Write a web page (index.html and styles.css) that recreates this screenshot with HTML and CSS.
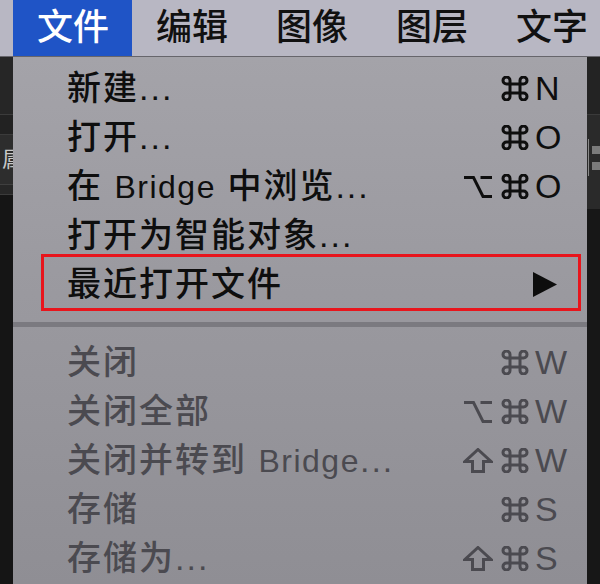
FILE: index.html
```html
<!DOCTYPE html>
<html lang="zh-CN">
<head>
<meta charset="utf-8">
<title>文件菜单</title>
<link rel="stylesheet" href="styles.css">
</head>
<body>
<div class="menubar">
  <div class="mb-item active">文件</div>
  <div class="mb-item">编辑</div>
  <div class="mb-item">图像</div>
  <div class="mb-item">图层</div>
  <div class="mb-item">文字</div>
</div>
<div class="stage">
  <div class="side side-left">
    <div class="blk b1"></div>
    <div class="blk b2"></div>
    <div class="blk b3"><span class="panel-char">属</span></div>
    <div class="blk b4"></div>
    <div class="blk b5"></div>
  </div>
  <div class="menu">
    <div class="row"><span class="label">新建...</span><span class="mods"><svg class="ic" viewBox="0 0 30 25"><path d="M10 8v9h10V8zM10 8H6.5A3.5 3.5 0 1 1 10 4.5zM20 8V4.5A3.5 3.5 0 1 1 23.5 8zM20 17h3.5A3.5 3.5 0 1 1 20 20.5zM10 17v3.5A3.5 3.5 0 1 1 6.5 17z"/></svg></span><span class="key">N</span></div>
    <div class="row"><span class="label">打开...</span><span class="mods"><svg class="ic" viewBox="0 0 30 25"><path d="M10 8v9h10V8zM10 8H6.5A3.5 3.5 0 1 1 10 4.5zM20 8V4.5A3.5 3.5 0 1 1 23.5 8zM20 17h3.5A3.5 3.5 0 1 1 20 20.5zM10 17v3.5A3.5 3.5 0 1 1 6.5 17z"/></svg></span><span class="key">O</span></div>
    <div class="row"><span class="label">在 <span class="lat">Bridge</span> 中浏览...</span><span class="mods"><svg class="ic" viewBox="0 0 30 25"><path d="M1 3.5h9.5l9.5 19h9M17.5 3.5H29"/></svg><svg class="ic" viewBox="0 0 30 25"><path d="M10 8v9h10V8zM10 8H6.5A3.5 3.5 0 1 1 10 4.5zM20 8V4.5A3.5 3.5 0 1 1 23.5 8zM20 17h3.5A3.5 3.5 0 1 1 20 20.5zM10 17v3.5A3.5 3.5 0 1 1 6.5 17z"/></svg></span><span class="key">O</span></div>
    <div class="row"><span class="label">打开为智能对象...</span></div>
    <div class="row marked"><span class="label">最近打开文件</span><svg class="arrow" width="24" height="25" viewBox="0 0 24 25"><polygon points="0,0 24,12.5 0,25" fill="#0d0d0d"/></svg></div>
    <div class="sep"></div>
    <div class="row off"><span class="label">关闭</span><span class="mods"><svg class="ic" viewBox="0 0 30 25"><path d="M10 8v9h10V8zM10 8H6.5A3.5 3.5 0 1 1 10 4.5zM20 8V4.5A3.5 3.5 0 1 1 23.5 8zM20 17h3.5A3.5 3.5 0 1 1 20 20.5zM10 17v3.5A3.5 3.5 0 1 1 6.5 17z"/></svg></span><span class="key">W</span></div>
    <div class="row off"><span class="label">关闭全部</span><span class="mods"><svg class="ic" viewBox="0 0 30 25"><path d="M1 3.5h9.5l9.5 19h9M17.5 3.5H29"/></svg><svg class="ic" viewBox="0 0 30 25"><path d="M10 8v9h10V8zM10 8H6.5A3.5 3.5 0 1 1 10 4.5zM20 8V4.5A3.5 3.5 0 1 1 23.5 8zM20 17h3.5A3.5 3.5 0 1 1 20 20.5zM10 17v3.5A3.5 3.5 0 1 1 6.5 17z"/></svg></span><span class="key">W</span></div>
    <div class="row off"><span class="label">关闭并转到 <span class="lat">Bridge</span>...</span><span class="mods"><svg class="ic" viewBox="0 0 30 25"><path d="M15 1.5L28 13.5h-7.5v10h-11v-10H2z"/></svg><svg class="ic" viewBox="0 0 30 25"><path d="M10 8v9h10V8zM10 8H6.5A3.5 3.5 0 1 1 10 4.5zM20 8V4.5A3.5 3.5 0 1 1 23.5 8zM20 17h3.5A3.5 3.5 0 1 1 20 20.5zM10 17v3.5A3.5 3.5 0 1 1 6.5 17z"/></svg></span><span class="key">W</span></div>
    <div class="row off"><span class="label">存储</span><span class="mods"><svg class="ic" viewBox="0 0 30 25"><path d="M10 8v9h10V8zM10 8H6.5A3.5 3.5 0 1 1 10 4.5zM20 8V4.5A3.5 3.5 0 1 1 23.5 8zM20 17h3.5A3.5 3.5 0 1 1 20 20.5zM10 17v3.5A3.5 3.5 0 1 1 6.5 17z"/></svg></span><span class="key">S</span></div>
    <div class="row off"><span class="label">存储为...</span><span class="mods"><svg class="ic" viewBox="0 0 30 25"><path d="M15 1.5L28 13.5h-7.5v10h-11v-10H2z"/></svg><svg class="ic" viewBox="0 0 30 25"><path d="M10 8v9h10V8zM10 8H6.5A3.5 3.5 0 1 1 10 4.5zM20 8V4.5A3.5 3.5 0 1 1 23.5 8zM20 17h3.5A3.5 3.5 0 1 1 20 20.5zM10 17v3.5A3.5 3.5 0 1 1 6.5 17z"/></svg></span><span class="key">S</span></div>
  </div>
  <div class="side side-right">
    <div class="blk r1"></div>
    <div class="blk r2">
      <div class="scroll-bar"></div>
      <div class="tabs"><div class="tab"></div><div class="tab"></div></div>
    </div>
    <div class="blk r3"></div>
  </div>
</div>
</body>
</html>
```
FILE: styles.css
```css
html, body {
  margin: 0;
  padding: 0;
}
body {
  width: 600px;
  height: 584px;
  overflow: hidden;
  background: #161616;
  font-family: "Liberation Sans", "Noto Sans CJK SC", sans-serif;
}
.menubar {
  display: flex;
  height: 56px;
  padding-left: 13px;
  background: #b8b7c3;
  border-bottom: 1px solid #66656b;
  overflow: hidden;
  white-space: nowrap;
}
.mb-item {
  flex: none;
  padding: 0 24px;
  line-height: 56px;
  font-size: 36px;
  font-weight: 500;
  color: #111;
}
.mb-item.active {
  padding-right: 23px;
  background: #1f54c6;
  color: #fff;
}
.stage {
  display: flex;
  height: 527px;
}
.side {
  width: 13px;
  flex: none;
  display: flex;
  flex-direction: column;
  overflow: hidden;
}
.blk { flex: none; }
.b1 { height: 57px; background: #262626; border-bottom: 1px solid #3b3b3b; }
.b2 { height: 19px; background: #222; border-bottom: 1px solid #3b3b3b; }
.b3 { height: 49px; background: #2d2d2d; border-bottom: 1px solid #3f3f3f; overflow: hidden; }
.b4 { height: 9px; background: #272727; border-bottom: 1px solid #3b3b3b; }
.b5 { flex: 1; background: #151515; }
.panel-char {
  display: block;
  margin: 12px 0 0 2px;
  font-size: 22px;
  line-height: 26px;
  color: #c8c8c8;
  white-space: nowrap;
}
.r1 { height: 57px; background: #232323; border-bottom: 1px solid #3a3a3a; }
.r2 {
  height: 94px;
  background: #2a2a2a;
  display: flex;
  gap: 3px;
  padding: 24px 0 0 1px;
  box-sizing: border-box;
}
.scroll-bar { width: 2px; height: 37px; background: #8a8a8a; }
.tabs { display: flex; flex-direction: column; gap: 8px; padding-top: 7px; }
.tab { width: 8px; height: 8px; background: #7b7b7b; }
.r3 { flex: 1; background: #171717; }

.menu {
  width: 574px;
  flex: none;
  box-sizing: border-box;
  padding-top: 7px;
  background: linear-gradient(180deg, #a4a3a9 0%, #9a999f 45%, #8f8e94 100%);
  overflow: hidden;
}
.row {
  position: relative;
  display: flex;
  align-items: center;
  height: 49px;
  padding: 0 12px 0 54px;
  font-size: 34px;
  font-weight: 500;
  letter-spacing: 2px;
  color: #0e0e0e;
  white-space: nowrap;
}
.row.off { color: #4b4a50; }
.label { flex: 1; line-height: 49px; }
.lat { font-size: 32px; letter-spacing: 1.5px; }
.mods {
  display: flex;
  justify-content: flex-end;
  gap: 7px;
}
.ic {
  width: 30px;
  height: 25px;
  fill: none;
  stroke: currentColor;
  stroke-width: 3;
  stroke-linejoin: miter;
}
.key {
  width: 40px;
  margin-left: 5px;
  font-size: 34px;
  letter-spacing: 0;
}
.arrow { margin-right: 18px; }
.row.marked::after {
  content: "";
  position: absolute;
  left: 28px;
  right: 6px;
  top: -6px;
  bottom: -2px;
  border: 3px solid #e8151c;
}
.sep {
  height: 5px;
  margin: 13px 0 11px;
  background: #7b7a80;
}
```
